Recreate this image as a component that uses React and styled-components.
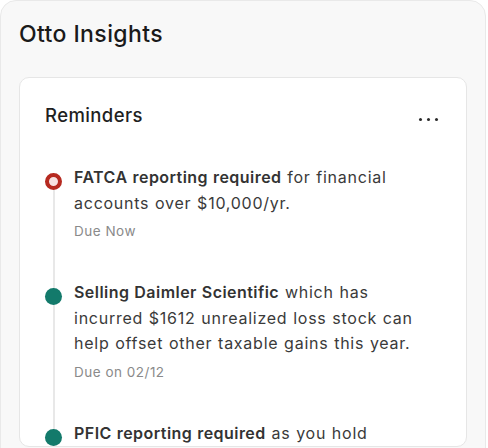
import React from "react";
import styled, { createGlobalStyle } from "styled-components";

const Global = createGlobalStyle`
  html, body { margin: 0; padding: 0; background: #fff; }
  body { font-family: Inter, "Noto Sans", sans-serif; -webkit-font-smoothing: antialiased; }
`;

const reminders = [
  {
    id: 1,
    title: "FATCA reporting required",
    text: " for financial accounts over $10,000/yr.",
    due: "Due Now",
    tone: "alert",
  },
  {
    id: 2,
    title: "Selling Daimler Scientific",
    text: " which has incurred $1612 unrealized loss stock can help offset other taxable gains this year.",
    due: "Due on 02/12",
    tone: "ok",
  },
  {
    id: 3,
    title: "PFIC reporting required",
    text: " as you hold shares in foreign mutual funds.",
    due: "Due on 03/01",
    tone: "ok",
  },
];

export default function App() {
  return (
    <>
      <Global />
      <Panel>
        <Title>Otto Insights</Title>
        <Card>
          <CardHeader>
            <CardTitle>Reminders</CardTitle>
            <MoreButton aria-label="More">
              <span />
              <span />
              <span />
            </MoreButton>
          </CardHeader>
          <Timeline>
            {reminders.map((r) => (
              <Item key={r.id}>
                <Marker tone={r.tone} />
                <Body>
                  <Text>
                    <strong>{r.title}</strong>
                    {r.text}
                  </Text>
                  <Due>{r.due}</Due>
                </Body>
              </Item>
            ))}
          </Timeline>
        </Card>
      </Panel>
    </>
  );
}

const Panel = styled.div`
  width: 486px;
  height: 520px;
  box-sizing: border-box;
  background: #f8f8f8;
  border: 1px solid #e9e9e9;
  border-radius: 16px;
  padding: 18px 18px 0 18px;
`;

const Title = styled.h1`
  margin: 0;
  font-size: 23px;
  font-weight: 500;
  color: #1a1a1a;
  line-height: 30px;
  letter-spacing: 0.4px;
`;

const Card = styled.div`
  margin-top: 28px;
  height: 370px;
  box-sizing: border-box;
  overflow: hidden;
  background: #fff;
  border: 1px solid #e6e6e6;
  border-radius: 10px;
  padding: 22px 25px 0 25px;
`;

const CardHeader = styled.div`
  display: flex;
  align-items: center;
  justify-content: space-between;
  height: 30px;
`;

const CardTitle = styled.h2`
  margin: 0;
  font-size: 18.5px;
  font-weight: 500;
  color: #1f1f1f;
  letter-spacing: 0.4px;
`;

const MoreButton = styled.button`
  display: flex;
  gap: 5px;
  border: 0;
  background: none;
  padding: 0;
  margin-right: 3px;
  margin-top: 8px;
  span {
    width: 3px;
    height: 3px;
    border-radius: 50%;
    background: #2a2a2a;
  }
`;

const Timeline = styled.div`
  position: relative;
  margin-top: 35px;
  &::before {
    content: "";
    position: absolute;
    left: 8px;
    top: 10px;
    bottom: 0;
    width: 2px;
    background: #e8e8e8;
  }
`;

const Item = styled.div`
  display: flex;
  gap: 12px;
  padding-bottom: 41px;
`;

const Marker = styled.div`
  position: relative;
  flex: none;
  width: 17px;
  height: 17px;
  margin-top: 8px;
  box-sizing: border-box;
  border-radius: 50%;
  background: ${(p) => (p.tone === "alert" ? "#f7e1e0" : "#137a6b")};
  border: ${(p) => (p.tone === "alert" ? "4px solid #b62a20" : "none")};
`;

const Body = styled.div`
  flex: 1;
  min-width: 0;
  max-width: 346px;
`;

const Text = styled.p`
  margin: 0;
  font-size: 16px;
  line-height: 25.5px;
  color: #3a3a3a;
  letter-spacing: 0.75px;
  word-spacing: 0.5px;
  strong {
    font-weight: 600;
    color: #333;
    letter-spacing: 0.45px;
  }
`;

const Due = styled.div`
  margin-top: 7px;
  font-size: 13.5px;
  color: #8a8a8a;
  letter-spacing: 0.5px;
`;
